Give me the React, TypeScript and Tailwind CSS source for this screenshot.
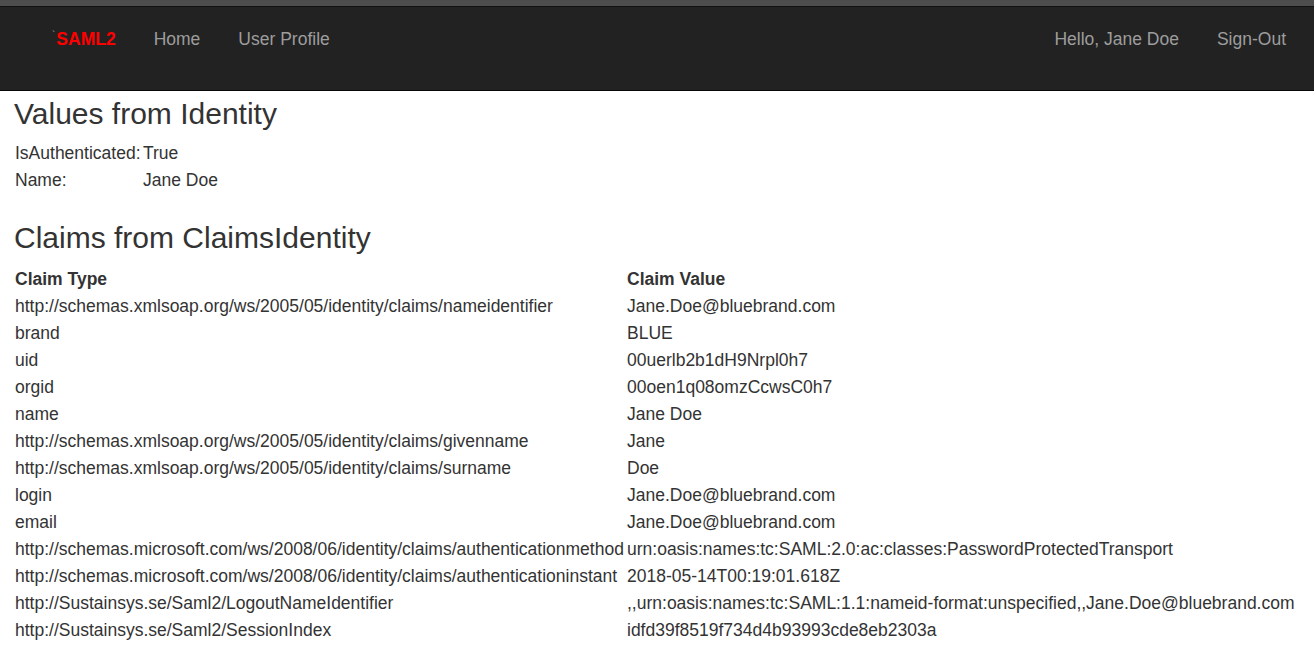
import React from "react";

const claims: [string, string][] = [
  ["http://schemas.xmlsoap.org/ws/2005/05/identity/claims/nameidentifier", "Jane.Doe@bluebrand.com"],
  ["brand", "BLUE"],
  ["uid", "00uerlb2b1dH9Nrpl0h7"],
  ["orgid", "00oen1q08omzCcwsC0h7"],
  ["name", "Jane Doe"],
  ["http://schemas.xmlsoap.org/ws/2005/05/identity/claims/givenname", "Jane"],
  ["http://schemas.xmlsoap.org/ws/2005/05/identity/claims/surname", "Doe"],
  ["login", "Jane.Doe@bluebrand.com"],
  ["email", "Jane.Doe@bluebrand.com"],
  ["http://schemas.microsoft.com/ws/2008/06/identity/claims/authenticationmethod", "urn:oasis:names:tc:SAML:2.0:ac:classes:PasswordProtectedTransport"],
  ["http://schemas.microsoft.com/ws/2008/06/identity/claims/authenticationinstant", "2018-05-14T00:19:01.618Z"],
  ["http://Sustainsys.se/Saml2/LogoutNameIdentifier", ",,urn:oasis:names:tc:SAML:1.1:nameid-format:unspecified,,Jane.Doe@bluebrand.com"],
  ["http://Sustainsys.se/Saml2/SessionIndex", "idfd39f8519f734d4b93993cde8eb2303a"],
];

export default function App() {
  return (
    <div
      className="min-h-[658px] bg-white text-[#333] text-[17.5px]"
      style={{ fontFamily: '"Liberation Sans", Arial, Helvetica, sans-serif' }}
    >
      <div className="h-[6px] bg-[#4d4d4d]" />
      <div className="h-px bg-[#111]" />
      <nav className="h-[84px] bg-[#222] border-b border-[#080808] flex items-start justify-between pt-[19px] pl-[52px] pr-[9px] text-[#9d9d9d]">
        <div className="flex items-center h-[27px] leading-[27px]">
          <span className="flex items-center">
            <span className="text-[#8a9aa8] text-[10px] relative -top-[4px]">`</span>
            <span className="text-[#ff0000] font-bold ml-[1px]">SAML2</span>
          </span>
          <span className="ml-[38px]">Home</span>
          <span className="ml-[38px]">User Profile</span>
        </div>
        <div className="flex items-center h-[27px] leading-[27px]">
          <span className="mr-[38px]">Hello, Jane Doe</span>
          <span className="mr-[19px]">Sign-Out</span>
        </div>
      </nav>
      <main className="pl-[15px] pt-[6px]">
        <h2 className="text-[30px] leading-[33px] -ml-[1px] text-[#333]">Values from Identity</h2>
        <div className="mt-[10px] grid grid-cols-[128px_auto] justify-start leading-[27px]">
          <div>IsAuthenticated:</div>
          <div>True</div>
          <div>Name:</div>
          <div>Jane Doe</div>
        </div>
        <h2 className="mt-[27px] text-[30px] leading-[33px] -ml-[1px] text-[#333]">Claims from ClaimsIdentity</h2>
        <div className="mt-[12px] grid grid-cols-[612px_auto] justify-start leading-[27px]">
          <div className="font-bold">Claim Type</div>
          <div className="font-bold">Claim Value</div>
          {claims.map(([t, v], i) => (
            <React.Fragment key={i}>
              <div className="whitespace-nowrap">{t}</div>
              <div className="whitespace-nowrap">{v}</div>
            </React.Fragment>
          ))}
        </div>
      </main>
    </div>
  );
}
